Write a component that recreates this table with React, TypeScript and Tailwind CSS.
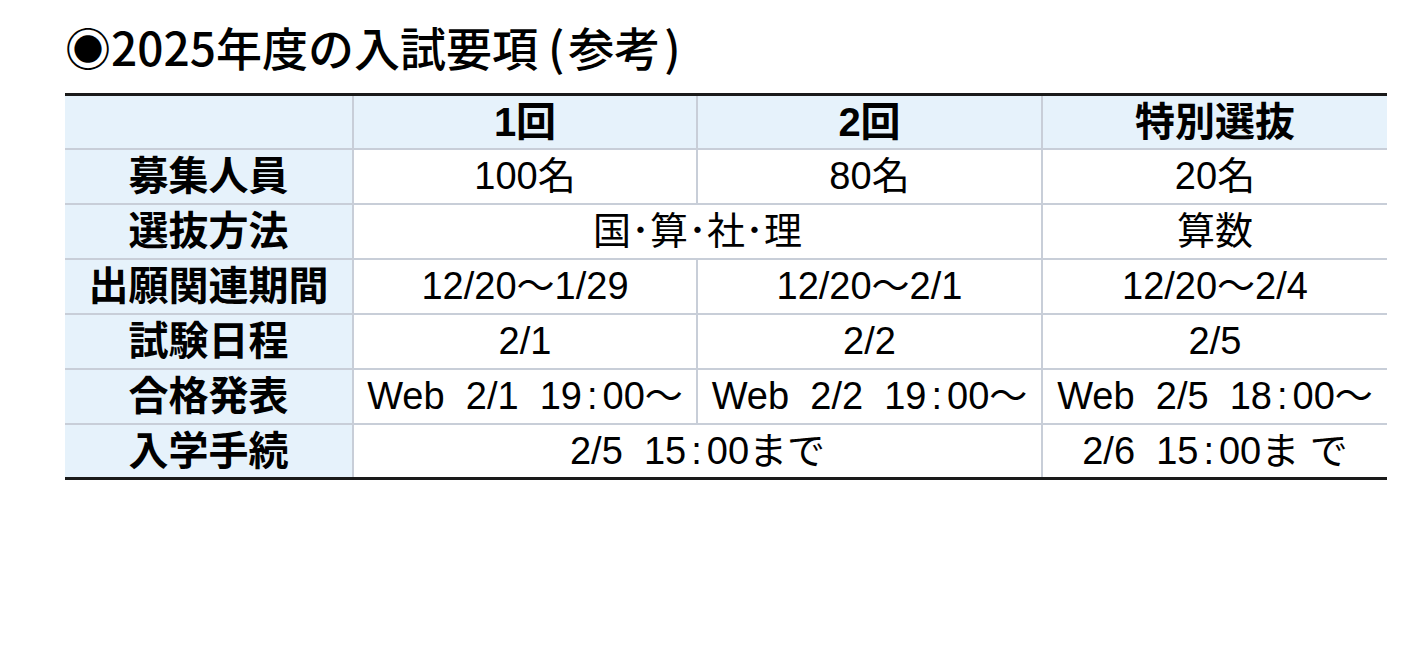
const jp = "font-['Liberation_Sans','Noto_Sans_CJK_JP',sans-serif]"

type Row = {
	label: string
	cells: { text: string; span?: number }[]
}

const rows: Row[] = [
	{
		label: "募集人員",
		cells: [{ text: "100名" }, { text: "80名" }, { text: "20名" }],
	},
	{
		label: "選抜方法",
		cells: [{ text: "国･算･社･理", span: 2 }, { text: "算数" }],
	},
	{
		label: "出願関連期間",
		cells: [
			{ text: "12/20〜1/29" },
			{ text: "12/20〜2/1" },
			{ text: "12/20〜2/4" },
		],
	},
	{
		label: "試験日程",
		cells: [{ text: "2/1" }, { text: "2/2" }, { text: "2/5" }],
	},
	{
		label: "合格発表",
		cells: [
			{ text: "Web  2/1  19:00〜" },
			{ text: "Web  2/2  19:00〜" },
			{ text: "Web  2/5  18:00〜" },
		],
	},
	{
		label: "入学手続",
		cells: [{ text: "2/5  15:00まで", span: 2 }, { text: "2/6  15:00ま で" }],
	},
]

// colons in the times sit with a little air on both sides
function CellText({ text }: { text: string }) {
	const parts = text.split(":")
	return (
		<>
			{parts.map((p, i) => (
				<span key={i}>
					{i > 0 && <span className="mx-[5px]">:</span>}
					{p}
				</span>
			))}
		</>
	)
}

export default function App() {
	return (
		<div className={`${jp} bg-white w-[1420px] h-[650px] pl-[65px] pt-[18px] text-black`}>
			<h1 className="font-['Noto_Sans_CJK_JP',sans-serif] text-[46px] font-medium leading-[56px]">
				◉2025年度の入試要項
				<span className="ml-[10px] mr-[4px]">(</span>参考<span className="ml-[4px]">)</span>
			</h1>

			<table className="mt-[19px] w-[1322px] border-collapse table-fixed leading-[40px]">
				<colgroup>
					<col className="w-[288px]" />
					<col className="w-[344px]" />
					<col className="w-[345px]" />
					<col className="w-[345px]" />
				</colgroup>
				<thead>
					<tr className="h-[54px] bg-[#e6f2fb] border-t-[3px] border-[#1a1a1a]">
						<th className="p-0 border-r-2 border-b-2 border-[#c8ced8]" />
						<th className="p-0 text-[40px] font-bold border-r-2 border-b-2 border-[#c8ced8]">1回</th>
						<th className="p-0 text-[40px] font-bold border-r-2 border-b-2 border-[#c8ced8]">2回</th>
						<th className="p-0 text-[40px] font-bold border-b-2 border-[#c8ced8]">特別選抜</th>
					</tr>
				</thead>
				<tbody>
					{rows.map((row, i) => (
						<tr
							key={row.label}
							className={`h-[55px] ${i === rows.length - 1 ? "border-b-[3px] border-[#1a1a1a]" : ""}`}>
							<td className="p-0 bg-[#e6f2fb] text-center text-[40px] font-bold border-r-2 border-b-2 border-[#c8ced8]">
								{row.label}
							</td>
							{row.cells.map((c, j) => (
								<td
									key={j}
									colSpan={c.span}
									className={`p-0 text-center text-[38px] whitespace-pre border-b-2 border-[#c8ced8] ${
										j < row.cells.length - 1 ? "border-r-2" : ""
									}`}>
									<CellText text={c.text} />
								</td>
							))}
						</tr>
					))}
				</tbody>
			</table>
		</div>
	)
}
